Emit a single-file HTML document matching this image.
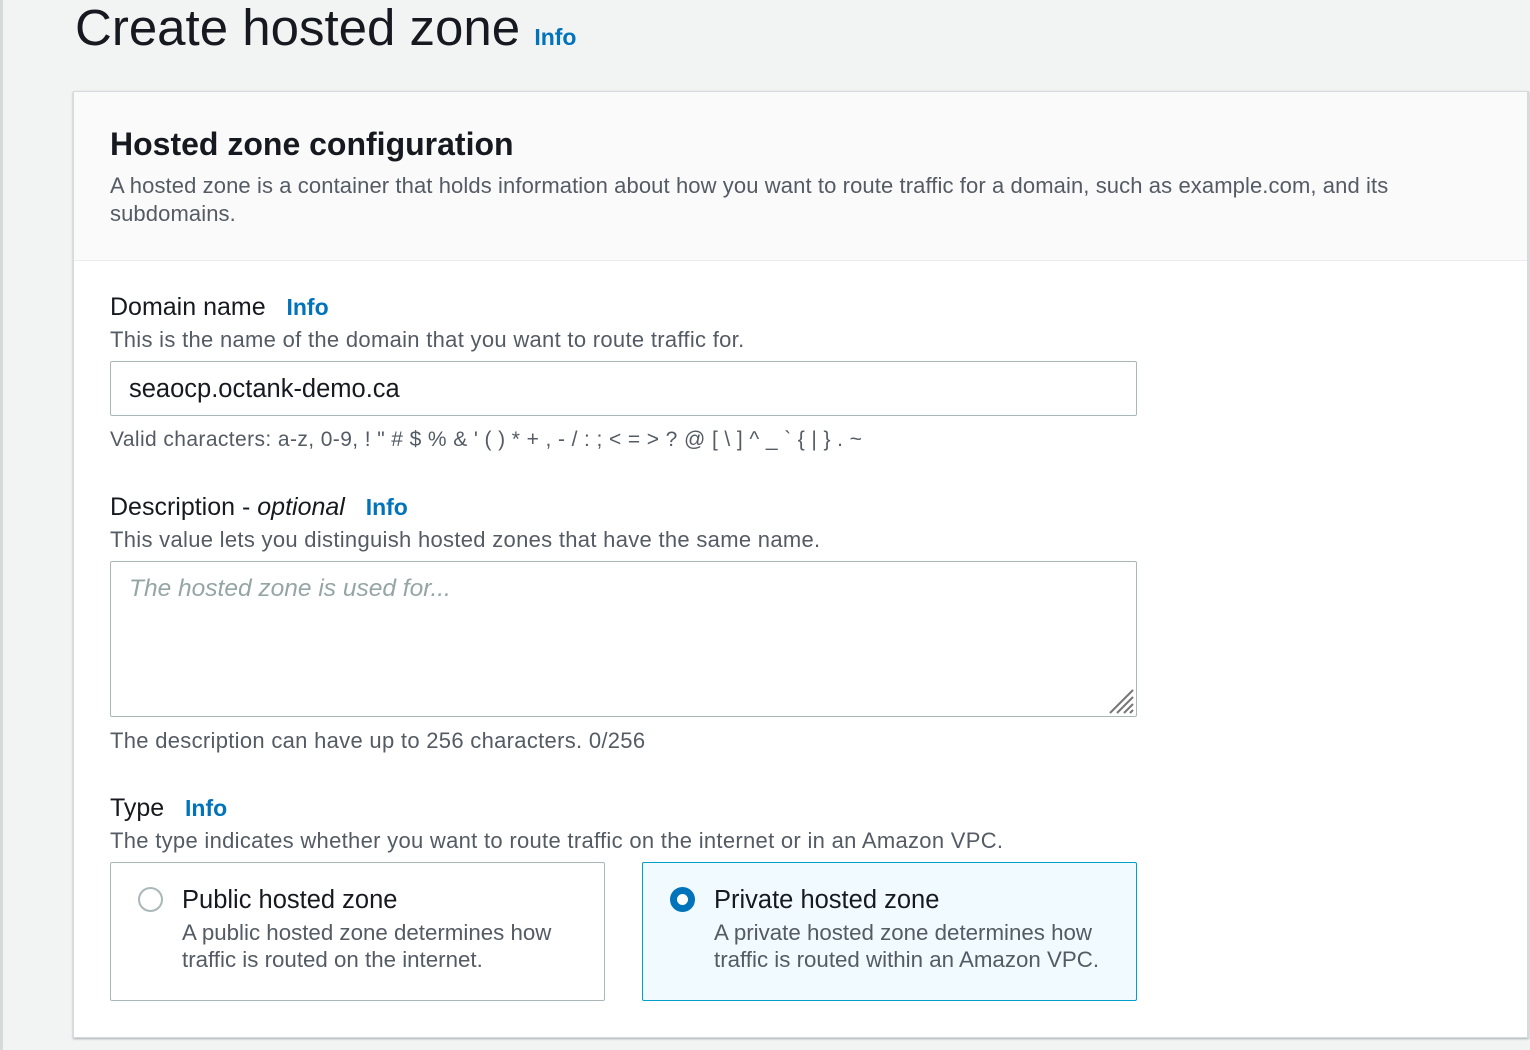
<!DOCTYPE html>
<html><head><meta charset="utf-8"><style>
*{margin:0;padding:0;box-sizing:border-box}
body{width:1530px;height:1050px;background:#f2f3f3;font-family:"Liberation Sans",Arial,sans-serif;position:relative;overflow:hidden;color:#16191f}
.a{position:absolute;white-space:nowrap}
.info{color:#0073bb;font-weight:bold}
.lbl{font-size:25px;color:#16191f}
.sub{font-size:22px;color:#545b64;letter-spacing:0.3px}
.box{position:absolute;border:1px solid #aab7b8;border-radius:2px;background:#fff}
</style></head><body>
<div style="position:absolute;left:0;top:0;width:3px;height:1050px;background:#d5dbdb"></div>
<div class="a" style="left:75px;top:-2px;font-size:51px;line-height:60px;color:#16191f">Create hosted zone <span class="info" style="font-size:23px">Info</span></div>

<div style="position:absolute;left:73px;top:91px;width:1456px;height:947px;background:#fff;border:1px solid #d5dbdb;border-right:2px solid #d5dbdb;box-shadow:0 1px 2px rgba(0,28,36,.3)">
  <div style="height:169px;background:#fafafa;border-bottom:1px solid #eaeded"></div>
</div>
<div class="a" style="left:110px;top:126px;font-size:32px;font-weight:bold">Hosted zone configuration</div>
<div class="a sub" style="left:110px;top:172px;line-height:28px;white-space:normal;width:1320px;letter-spacing:0.1px">A hosted zone is a container that holds information about how you want to route traffic for a domain, such as example.com, and its subdomains.</div>

<div class="a lbl" style="left:110px;top:293px">Domain name &nbsp; <span class="info" style="font-size:23px">Info</span></div>
<div class="a sub" style="left:110px;top:327px">This is the name of the domain that you want to route traffic for.</div>
<div class="box" style="left:110px;top:361px;width:1027px;height:55px"></div>
<div class="a" style="left:129px;top:375px;font-size:25.5px">seaocp.octank-demo.ca</div>
<div class="a sub" style="left:110px;top:428px;font-size:21px;letter-spacing:0.4px">Valid characters: a-z, 0-9, ! " # $ % &amp; ' ( ) * + , - / : ; &lt; = &gt; ? @ [ \ ] ^ _ ` { | } . ~</div>

<div class="a lbl" style="left:110px;top:493px">Description - <i>optional</i> &nbsp; <span class="info" style="font-size:23px">Info</span></div>
<div class="a sub" style="left:110px;top:527px">This value lets you distinguish hosted zones that have the same name.</div>
<div class="box" style="left:110px;top:561px;width:1027px;height:156px"></div>
<div class="a" style="left:129px;top:575px;font-size:24.5px;font-style:italic;color:#95a5a6">The hosted zone is used for...</div>
<svg class="a" style="left:1108px;top:688px" width="26" height="26"><g stroke="#777" stroke-width="2"><line x1="2" y1="25" x2="25" y2="2"/><line x1="9" y1="25" x2="25" y2="9"/><line x1="16" y1="25" x2="25" y2="16"/><line x1="22" y1="25" x2="25" y2="22"/></g></svg>
<div class="a sub" style="left:110px;top:728px">The description can have up to 256 characters. 0/256</div>

<div class="a lbl" style="left:110px;top:794px">Type &nbsp; <span class="info" style="font-size:23px">Info</span></div>
<div class="a sub" style="left:110px;top:828px">The type indicates whether you want to route traffic on the internet or in an Amazon VPC.</div>
<div class="box" style="left:110px;top:862px;width:495px;height:139px"></div>
<div style="position:absolute;left:138px;top:887px;width:25px;height:25px;border-radius:50%;border:2px solid #aab7b8;background:#fff"></div>
<div class="a lbl" style="left:182px;top:886px;font-size:25.5px">Public hosted zone</div>
<div class="a sub" style="left:182px;top:919px;line-height:27px;font-size:22.3px;letter-spacing:0">A public hosted zone determines how<br>traffic is routed on the internet.</div>
<div class="box" style="left:642px;top:862px;width:495px;height:139px;background:#f1faff;border-color:#00a1c9"></div>
<div style="position:absolute;left:670px;top:887px;width:25px;height:25px;border-radius:50%;border:7px solid #0073bb;background:#fff"></div>
<div class="a lbl" style="left:714px;top:886px;font-size:25.5px">Private hosted zone</div>
<div class="a sub" style="left:714px;top:919px;line-height:27px;font-size:22.3px;letter-spacing:0">A private hosted zone determines how<br>traffic is routed within an Amazon VPC.</div>
</body></html>
